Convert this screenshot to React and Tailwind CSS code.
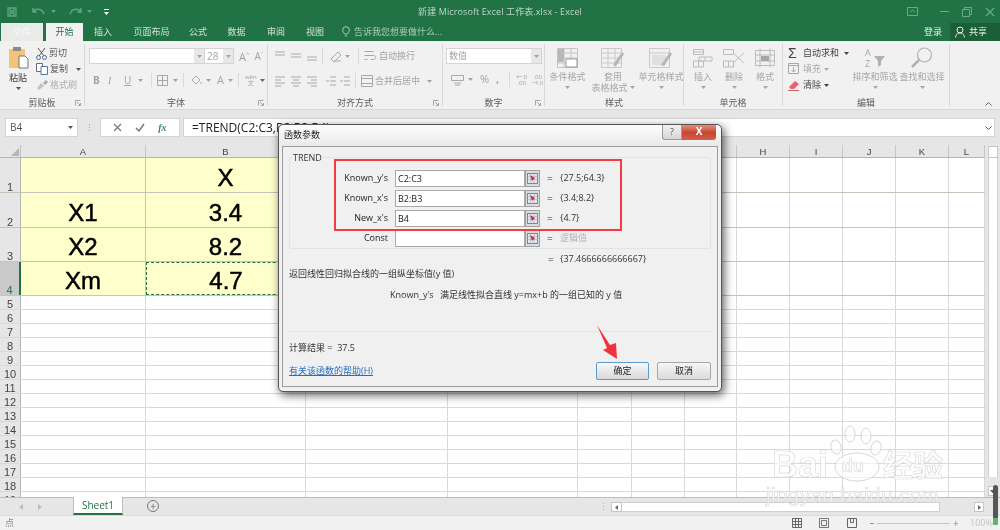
const cols = [125, 160, 142, 130, 54, 53, 52, 53, 53, 53, 53, 36];
const letters = ["A", "B", "C", "D", "E", "F", "G", "H", "I", "J", "K", "L"];
const gridCols = "grid grid-cols-[21px_125px_160px_142px_130px_54px_53px_52px_53px_53px_53px_53px_36px]";

const rows = [
  { n: 1, h: "h-[35px]", a: "", b: "X" },
  { n: 2, h: "h-[35px]", a: "X1", b: "3.4" },
  { n: 3, h: "h-[34px]", a: "X2", b: "8.2" },
  { n: 4, h: "h-[34px]", a: "Xm", b: "4.7" },
];
const emptyRows = [5, 6, 7, 8, 9, 10, 11, 12, 13, 14, 15, 16, 17, 18, 19];

const Caret = ({ className = "mx-[3px]" }) => (
  <svg width="5" height="3" viewBox="0 0 5 3" className={"shrink-0 " + className}>
    <path d="M0 0h5L2.5 3z" fill="currentColor" />
  </svg>
);

const Ic = ({ w = 14, h = 14, children, className = "" }) => (
  <svg width={w} height={h} viewBox={`0 0 ${w} ${h}`} fill="none" stroke="#a8a8a8" strokeWidth="1" className={"shrink-0 " + className}>
    {children}
  </svg>
);

const AlignIcon = ({ lines }) => (
  <Ic w={12} h={12}>
    {lines.map((l, i) => (
      <path key={i} d={`M${l[0]} ${l[2]}H${l[1]}`} />
    ))}
  </Ic>
);

const Group = ({ w, label, launcher, children }) => (
  <div className={"relative flex flex-col border-r border-[#d9d9d9] my-[3px] " + w}>
    <div className="h-[52px] shrink-0 flex">{children}</div>
    <div className="h-[13px] shrink-0 -mb-[3px] flex items-center justify-center text-[9px] text-[#5c5c5c]">{label}</div>
    {launcher && (
      <svg width="6" height="6" viewBox="0 0 6 6" className="absolute right-[3px] bottom-0">
        <path d="M0.5 5.500V0.5H5.500M2 2l3 3M5.500 3v2.500H3" stroke="#a5a5a5" fill="none" />
      </svg>
    )}
  </div>
);

const BigBtn = ({ w, label, label2, children, caret = true }) => (
  <div className={"flex flex-col items-center text-[9px] leading-[11px] text-[#a6a6a6] whitespace-nowrap " + w}>
    <div className="h-[24px] mt-[2px] flex items-center">{children}</div>
    <div className="mt-[1px]">{label}</div>
    {label2 && (
      <div className="flex items-center">
        {label2}
        <Caret className="ml-[2px]" />
      </div>
    )}
    {caret && !label2 && <Caret className="mt-[4px]" />}
  </div>
);

const RefBtn = () => (
  <div className="w-[15px] h-[17px] bg-[#dcdcdc] border border-[#a0a0a0] flex items-center justify-center">
    <svg width="11" height="11" viewBox="0 0 11 11">
      <rect x="0.5" y="0.5" width="10" height="10" fill="#dfe8f4" stroke="#6f87a8" />
      <path d="M0.5 3.500h10M0.5 6.500h10M3.500 .5v10M7 .5v10" stroke="#9eb2cc" strokeWidth=".6" />
      <path d="M3 2l5 3-3 3z" fill="#d9322c" />
    </svg>
  </div>
);

const ArgRow = ({ label, value, result, muted }) => (
  <div className="flex items-center h-[20px]">
    <div className="w-[93px] text-right text-[9px] text-[#222]">{label}</div>
    <div className="ml-[7px] w-[130px] h-[17px] bg-white border border-[#a9a9a9] pl-[2px] text-[9px] leading-[15px] text-[#222]">{value}</div>
    <RefBtn />
    <div className="ml-[7px] w-[13px] text-[10px] text-[#333]">=</div>
    <div className={"text-[9px] " + (muted ? "text-[#b5b5b5]" : "text-[#333]")}>{result}</div>
  </div>
);

export default function App() {
  return (
    <div className="relative w-[1000px] h-[530px] overflow-hidden bg-white font-['Open_Sans','Noto_Sans_CJK_SC',sans-serif] blur-[0.4px]">
      {/* title bar */}
      <div className="bg-[#217346] text-white">
        <div className="h-[23px] flex items-center">
          <div className="flex-1 flex items-center gap-[5px] pl-[5px] text-[#5fa57f]">
            <svg width="14" height="14" viewBox="0 0 14 14" fill="none" stroke="currentColor" strokeWidth="1.3">
              <path d="M3 3h8v8H3zM5 3v3h4V3M5 11V8h4v3" />
            </svg>
            <svg width="14" height="12" viewBox="0 0 14 12" fill="none" stroke="currentColor" strokeWidth="1.5" className="ml-[8px]">
              <path d="M1 2v4h4M1 6c2-4 9-4 11 2" />
            </svg>
            <Caret className="" />
            <svg width="14" height="12" viewBox="0 0 14 12" fill="none" stroke="currentColor" strokeWidth="1.5" className="ml-[7px]">
              <path d="M13 2v4H9M13 6C11 2 4 2 2 8" />
            </svg>
            <Caret className="" />
            <svg width="5" height="6" viewBox="0 0 5 6" className="ml-[7px] text-white">
              <path d="M0 0h5v1H0zM0 3h5L2.500 6z" fill="currentColor" />
            </svg>
          </div>
          <div className="text-[9px] text-[#bcd6c8] tracking-[0.1px]">新建 Microsoft Excel 工作表.xlsx - Excel</div>
          <div className="flex-1 flex items-center justify-end gap-[12px] pr-[5px] text-[#6da98a]">
            <svg width="11" height="9" viewBox="0 0 11 9" fill="none" stroke="currentColor">
              <path d="M.5.500h10v8H.5zM3 5l2.500-2L8 5" />
            </svg>
            <div className="w-[9px] h-px bg-current ml-[10px]"></div>
            <svg width="10" height="10" viewBox="0 0 10 10" fill="none" stroke="currentColor" className="ml-[1px]">
              <path d="M.5 2.500h7v7h-7zM2.500 2.500V.5h7v7H7.500" />
            </svg>
            <svg width="10" height="10" viewBox="0 0 10 10" fill="none" stroke="currentColor" strokeWidth="1.2" className="ml-[1px]">
              <path d="M1 1l8 8M9 1l-8 8" />
            </svg>
          </div>
        </div>
        <div className="h-[18px] flex items-stretch text-[9px] text-[#cfe3d8]">
          <div className="ml-px w-[42px] bg-[#e9ebe9] flex items-center justify-center text-[#f7f7f7]">文件</div>
          <div className="ml-[3px] w-[37px] bg-[#f1f1f1] flex items-center justify-center text-[#217346]">开始</div>
          <div className="w-[40px] flex items-center justify-center">插入</div>
          <div className="w-[57px] flex items-center justify-center">页面布局</div>
          <div className="w-[36px] flex items-center justify-center">公式</div>
          <div className="w-[41px] flex items-center justify-center">数据</div>
          <div className="w-[38px] flex items-center justify-center">审阅</div>
          <div className="w-[40px] flex items-center justify-center">视图</div>
          <div className="ml-[7px] flex items-center gap-[4px] text-[#a9cbb8]">
            <svg width="8" height="12" viewBox="0 0 8 12" fill="none" stroke="currentColor">
              <path d="M2.500 8C2 6.500.7 6 .7 4a3.300 3.300 0 0 1 6.600 0c0 2-1.300 2.500-1.800 4zM3 10h2" />
            </svg>
            告诉我您想要做什么...
          </div>
          <div className="ml-auto mr-[8px] flex items-center text-[#e6f0ea]">登录</div>
          <div className="w-[50px] bg-[#1b5e38] flex items-center gap-[3px] pl-[5px] text-[#eaf3ee]">
            <svg width="11" height="12" viewBox="0 0 11 12" fill="none" stroke="currentColor">
              <circle cx="5" cy="4" r="3" />
              <path d="M.5 11.500C1 8 3 7 5 7s4 1 4.500 4.500" />
            </svg>
            共享
          </div>
        </div>
      </div>

      {/* ribbon */}
      <div className="h-[68px] flex bg-[#f1f1f1]">
        <Group w="w-[85px]" label="剪贴板" launcher>
          <div className="w-[36px] flex flex-col items-center text-[9px] text-[#444]">
            <svg width="21" height="22" viewBox="0 0 21 22" className="mt-[3px]">
              <rect x="1" y="2" width="16" height="19" fill="#f2c477" />
              <rect x="5" y="0" width="8" height="4" fill="#8a8a8a" />
              <path d="M11 9h6l3 3v9h-9z" fill="#fff" stroke="#777" />
            </svg>
            <div className="leading-[11px] mt-[3px]">粘贴</div>
            <Caret className="mt-[4px] text-[#555]" />
          </div>
          <div className="flex flex-col pt-[1px] text-[9px] leading-[16px]">
            <div className="flex items-center gap-[2px] text-[#5a5a5a]">
              <svg width="11" height="13" viewBox="0 0 11 13" fill="none" stroke="#4a6f9a">
                <path d="M2 1l6 8M9 1L3 9" stroke="#555" />
                <circle cx="2.500" cy="10.500" r="2" />
                <circle cx="8.500" cy="10.500" r="2" />
              </svg>
              剪切
            </div>
            <div className="flex items-center gap-[2px] text-[#5a5a5a]">
              <svg width="12" height="12" viewBox="0 0 12 12" fill="#fff" stroke="#6d6d6d">
                <path d="M.5.500h6v8h-6z" />
                <path d="M5 3.500h6.500v8H5z" stroke="#4a78ad" />
              </svg>
              复制
              <Caret className="ml-[6px]" />
            </div>
            <div className="flex items-center gap-[2px] text-[#aeaeae]">
              <svg width="12" height="11" viewBox="0 0 12 11">
                <path d="M1 8l4-5 3 3-5 4z" fill="#c4c4c4" />
                <path d="M7 3l3-3 2 2-3 3z" fill="#a9a9a9" />
              </svg>
              格式刷
            </div>
          </div>
        </Group>

        <Group w="w-[183px]" label="字体" launcher>
          <div className="pl-[4px] pt-[4px] flex flex-col text-[#a3a3a3]">
            <div className="flex items-center">
              <div className="w-[116px] h-[16px] bg-white border border-[#d4d4d4] flex justify-end">
                <div className="w-[10px] bg-[#e8e8e8] flex items-center justify-center"><Caret className="" /></div>
              </div>
              <div className="w-[29px] h-[16px] bg-white border border-[#d4d4d4] border-l-0 flex justify-between text-[10px] leading-[14px] pl-[2px]">
                28
                <div className="w-[10px] bg-[#e8e8e8] flex items-center justify-center"><Caret className="" /></div>
              </div>
              <div className="ml-[5px] text-[11px] leading-none">A<span className="text-[6px] align-top">^</span></div>
              <div className="ml-[5px] text-[10px] leading-none">A<span className="text-[6px] align-top">ˇ</span></div>
            </div>
            <div className="mt-[9px] h-[14px] flex items-center text-[10px]">
              <span className="ml-[4px] w-[15px] font-bold">B</span>
              <span className="w-[16px] italic font-['Liberation_Serif',serif]">I</span>
              <span className="w-[12px] underline">U</span>
              <Caret className="ml-[2px]" />
              <div className="ml-[8px] mr-[5px] w-px h-[14px] bg-[#d9d9d9]"></div>
              <Ic w={11} h={11}><path d="M.5.500h10v10H.5zM.5 5.500h10M5.500.5v10" /></Ic>
              <Caret className="ml-[5px]" />
              <div className="ml-[5px] mr-[6px] w-px h-[14px] bg-[#d9d9d9]"></div>
              <Ic w={13} h={12}><path d="M2 6l4-4 4 4-4 4zM11 8v2" /></Ic>
              <Caret className="ml-[3px]" />
              <span className="ml-[6px] text-[11px]">A</span>
              <Caret className="ml-[4px]" />
              <div className="ml-[5px] mr-[6px] w-px h-[14px] bg-[#d9d9d9]"></div>
              <div className="flex flex-col items-center text-[6px] leading-[6px]"><span>wén</span><span>文</span></div>
              <Caret className="ml-[3px] text-[#666]" />
            </div>
          </div>
        </Group>

        <Group w="w-[175px]" label="对齐方式" launcher>
          <div className="pl-[6px] pt-[3px] flex flex-col text-[#a3a3a3] text-[9px]">
            <div className="h-[18px] flex items-center">
              <AlignIcon lines={[[1, 11, 2], [1, 11, 5]]} />
              <div className="ml-[4px]"><AlignIcon lines={[[1, 11, 4], [1, 11, 7]]} /></div>
              <div className="ml-[4px]"><AlignIcon lines={[[1, 11, 7], [1, 11, 10]]} /></div>
              <div className="ml-[4px] mr-[7px] w-px h-[16px] bg-[#d9d9d9]"></div>
              <Ic w={13} h={12}><path d="M1 9l7-7 3 3-7 7zM4 11l7 0" /></Ic>
              <Caret className="ml-[2px]" />
              <div className="ml-[8px] mr-[5px] w-px h-[16px] bg-[#d9d9d9]"></div>
              <Ic w={13} h={12}><path d="M.5 1.500h9M.5 5.500h9c3 0 3 4 0 4H7M.5 9.500h3" /></Ic>
              <span className="ml-[2px]">自动换行</span>
            </div>
            <div className="mt-[8px] h-[16px] flex items-center">
              <AlignIcon lines={[[1, 11, 2], [1, 7, 5], [1, 11, 8], [1, 7, 11]]} />
              <div className="ml-[4px]"><AlignIcon lines={[[1, 11, 2], [3, 9, 5], [1, 11, 8], [3, 9, 11]]} /></div>
              <div className="ml-[4px]"><AlignIcon lines={[[1, 11, 2], [5, 11, 5], [1, 11, 8], [5, 11, 11]]} /></div>
              <div className="ml-[7px]"><AlignIcon lines={[[1, 4, 6], [5, 11, 2], [5, 11, 6], [5, 11, 10]]} /></div>
              <div className="ml-[2px]"><AlignIcon lines={[[1, 4, 6], [5, 11, 2], [5, 11, 6], [5, 11, 10]]} /></div>
              <div className="ml-[4px] mr-[5px] w-px h-[16px] bg-[#d9d9d9]"></div>
              <Ic w={12} h={12}><path d="M.5.500h11v11H.5zM.5 3.500h11M.5 8.500h11" /></Ic>
              <span className="ml-[2px]">合并后居中</span>
              <Caret className="ml-[7px]" />
            </div>
          </div>
        </Group>

        <Group w="w-[102px]" label="数字" launcher>
          <div className="pl-[3px] pt-[4px] flex flex-col text-[#a3a3a3]">
            <div className="w-[96px] h-[16px] bg-white border border-[#d4d4d4] flex justify-between text-[9px] leading-[14px] pl-[2px]">
              数值
              <div className="w-[10px] bg-[#e8e8e8] flex items-center justify-center"><Caret className="" /></div>
            </div>
            <div className="mt-[8px] h-[15px] flex items-center text-[11px]">
              <Ic w={13} h={12} className="ml-[5px]"><path d="M.5 1.500h12v5H.5zM3 9h7M4 11h5" /></Ic>
              <Caret className="ml-[4px]" />
              <span className="ml-[7px]">%</span>
              <span className="ml-[7px] font-bold">,</span>
              <div className="ml-[10px] mr-[6px] w-px h-[15px] bg-[#d9d9d9]"></div>
              <div className="text-[6px] leading-[6px] text-center">←.0<br />.00</div>
              <div className="ml-[5px] text-[6px] leading-[6px] text-center">.00<br />→.0</div>
            </div>
          </div>
        </Group>

        <Group w="w-[139px]" label="样式">
          <div className="ml-[3px] flex">
            <BigBtn w="w-[39px]" label="条件格式">
              <svg width="21" height="20" viewBox="0 0 21 20" fill="none" stroke="#c4c4c4">
                <path d="M.5.500h20v19H.5zM.5 5h20M.5 10h20M.5 15h20M7 .5v19M14 .5v19" />
                <rect x="1" y="1" width="6" height="13" fill="#b8b8b8" stroke="none" />
                <rect x="9" y="11" width="11" height="8" fill="#fff" stroke="#999" />
              </svg>
            </BigBtn>
            <BigBtn w="w-[52px]" label="套用" label2="表格格式">
              <svg width="24" height="20" viewBox="0 0 24 20" fill="none" stroke="#c9c9c9">
                <path d="M.5.500h20v19H.5zM.5 5h20M.5 10h20M.5 15h20M7 .5v19M14 .5v19" />
                <path d="M12 17l9-13 2 2-8 12z" fill="#b5b5b5" stroke="none" />
              </svg>
            </BigBtn>
            <BigBtn w="w-[44px]" label="单元格样式">
              <svg width="24" height="20" viewBox="0 0 24 20" fill="none" stroke="#c9c9c9">
                <path d="M.5.500h20v19H.5zM.5 5h20" />
                <rect x="3" y="7" width="14" height="10" fill="#e0e0e0" stroke="none" />
                <path d="M12 17l9-13 2 2-8 12z" fill="#b5b5b5" stroke="none" />
              </svg>
            </BigBtn>
          </div>
        </Group>

        <Group w="w-[99px]" label="单元格">
          <div className="flex ml-[3px]">
            <BigBtn w="w-[32px]" label="插入">
              <svg width="20" height="20" viewBox="0 0 20 20" fill="none" stroke="#bcbcbc">
                <path d="M.5 1.500h10v5H.5zM.5 4h10M6 9h13v4H6zM12 9v4M.5 13h10v6H.5zM5.500 13v6" />
              </svg>
            </BigBtn>
            <BigBtn w="w-[30px]" label="删除">
              <svg width="22" height="20" viewBox="0 0 22 20" fill="none" stroke="#bcbcbc">
                <path d="M.5 1.500h10v5H.5zM.5 13h10v6H.5zM5.500 13v6M10 5l11 10M21 5L10 15" />
              </svg>
            </BigBtn>
            <BigBtn w="w-[32px]" label="格式">
              <svg width="20" height="20" viewBox="0 0 20 20" fill="none" stroke="#bcbcbc">
                <path d="M.5 2.500h19v15H.5zM5 .5v19M15 .5v19M.5 7h19M.5 13h19" />
                <rect x="6" y="8" width="8" height="5" fill="#a5a5a5" stroke="none" />
              </svg>
            </BigBtn>
          </div>
        </Group>

        <Group w="w-[167px]" label="编辑">
          <div className="pl-[5px] pt-[1px] w-[69px] flex flex-col text-[9px] leading-[16px] whitespace-nowrap">
            <div className="flex items-center text-[#444]">
              <span className="w-[14px] text-[14px] leading-[16px] font-['Liberation_Sans',sans-serif]">Σ</span>
              <span className="ml-[1px]">自动求和</span>
              <Caret className="ml-[5px]" />
            </div>
            <div className="flex items-center text-[#aaa]">
              <Ic w={12} h={12} className="mr-[3px]"><path d="M.5.500h10v10H.5zM.5 2.500h10M5.500 4v5M3.500 7l2 2 2-2" /></Ic>
              填充<Caret className="ml-[3px]" />
            </div>
            <div className="flex items-center text-[#444]">
              <svg width="12" height="11" viewBox="0 0 12 11" className="mr-[3px]">
                <path d="M1 7l6-6 4 3-5 5H3z" fill="#e8636a" />
                <path d="M0 10.500h11" stroke="#c9666b" />
              </svg>
              清除<Caret className="ml-[3px]" />
            </div>
          </div>
          <BigBtn w="w-[46px]" label="排序和筛选">
            <svg width="22" height="24" viewBox="0 0 22 24" fill="none" stroke="#b0b0b0">
              <path d="M10 10h11l-4 5v4l-3 2v-6z" fill="#b0b0b0" stroke="none" />
              <text x="1" y="10" fontSize="9" fill="#aaa" stroke="none">A</text>
              <text x="1" y="21" fontSize="9" fill="#aaa" stroke="none">Z</text>
            </svg>
          </BigBtn>
          <BigBtn w="w-[48px]" label="查找和选择">
            <svg width="22" height="22" viewBox="0 0 22 22" fill="none" stroke="#b0b0b0" strokeWidth="1.2">
              <circle cx="13.500" cy="8" r="7" />
              <path d="M8 13l-7 7" strokeWidth="2.500" />
            </svg>
          </BigBtn>
        </Group>

        <div className="flex-1 relative">
          <svg width="7" height="4" viewBox="0 0 7 4" className="absolute right-[8px] bottom-[3px]" fill="none" stroke="#666">
            <path d="M.5 3.500l3-3 3 3" />
          </svg>
        </div>
      </div>

      {/* strip + formula bar */}
      <div className="h-[6px] bg-[#e6e6e6] border-t border-[#d8d8d8]"></div>
      <div className="h-[30px] bg-[#e6e6e6] flex items-start pt-[3px]">
        <div className="ml-[5px] w-[73px] h-[19px] bg-white border border-[#d4d4d4] flex items-center justify-between px-[4px] text-[10px] text-[#555]">
          B4
          <Caret className="text-[#555]" />
        </div>
        <div className="w-[22px] text-center text-[#999] text-[9px] leading-[19px]">⋮</div>
        <div className="w-[80px] h-[19px] bg-white border border-[#d4d4d4] flex items-center justify-around px-[6px]">
          <svg width="9" height="9" viewBox="0 0 9 9" stroke="#777" strokeWidth="1.2"><path d="M1 1l7 7M8 1L1 8" /></svg>
          <svg width="10" height="9" viewBox="0 0 10 9" fill="none" stroke="#777" strokeWidth="1.4"><path d="M1 5l3 3 5-7" /></svg>
          <span className="text-[10px] italic font-bold text-[#3c8a60] font-['Liberation_Serif',serif]">fx</span>
        </div>
        <div className="ml-[3px] w-[812px] h-[19px] bg-white border border-[#d4d4d4] pl-[8px] text-[12px] leading-[17px] text-[#222] relative">
          =TREND(C2:C3,B2:B3,B4)
          <svg width="7" height="4" viewBox="0 0 7 4" className="absolute right-[2px] top-[7px]" fill="none" stroke="#555">
            <path d="M.5.500l3 3 3-3" />
          </svg>
        </div>
      </div>

      {/* sheet + vertical scrollbar */}
      <div className="h-[352px] flex overflow-hidden">
        <div className="w-[985px] border-r border-[#c6c6c6]">
          <div className={gridCols + " h-[13px] bg-[#e6e6e6] border-b border-[#b4b4b4] text-[9.500px] leading-[10px] text-[#444] text-center font-['Liberation_Sans',sans-serif]"}>
            <div className="border-r border-[#c0c0c0] flex items-end justify-end p-[1px]">
              <div className="w-0 h-0 border-l-[8px] border-l-transparent border-b-[8px] border-b-[#b5b5b5]"></div>
            </div>
            {letters.map((l, i) => (
              <div key={l} className="pt-[2px] border-r border-[#c6c6c6]">{l}</div>
            ))}
          </div>
          {rows.map((r) => (
            <div key={r.n} className={gridCols + " border-b border-[#c4c4b8] " + r.h}>
              <div className={"flex items-end justify-center text-[11px] leading-[10px] border-r font-['Liberation_Sans',sans-serif] " + (r.n === 4 ? "bg-[#c9c9c9] text-[#217346] border-r-2 border-[#217346]" : "bg-[#e6e6e6] text-[#444] border-[#b4b4b4]")}>{r.n}</div>
              <div className="bg-[#ffffcc] border-r border-[#c4c4b8] flex items-center justify-center pt-[5px] text-[24px] leading-[24px] text-black font-['Liberation_Sans',sans-serif] [-webkit-text-stroke:0.5px_black]">{r.a}</div>
              <div className={"bg-[#ffffcc] flex items-center justify-center pt-[5px] text-[24px] leading-[24px] text-black font-['Liberation_Sans',sans-serif] [-webkit-text-stroke:0.5px_black] " + (r.n === 4 ? "border border-dashed border-[#217346]" : "border-r border-[#c4c4b8]")}>{r.b}</div>
              <div className="bg-[#ffffcc]"></div>
              {cols.slice(3).map((c, i) => (
                <div key={i} className="border-r border-[#d9d9d9]"></div>
              ))}
            </div>
          ))}
          {emptyRows.map((n) => (
            <div key={n} className={gridCols + " h-[14px] border-b border-[#d9d9d9]"}>
              <div className="bg-[#e6e6e6] border-r border-[#b4b4b4] flex items-end justify-center text-[11px] leading-[10px] text-[#444] font-['Liberation_Sans',sans-serif]">{n}</div>
              {cols.map((c, i) => (
                <div key={i} className="border-r border-[#d9d9d9]"></div>
              ))}
            </div>
          ))}
        </div>
        <div className="flex-1 bg-[#e6e6e6] flex flex-col items-center">
          <div className="w-[10px] h-[12px] mt-px bg-white border border-[#c6c6c6]"></div>
          <div className="w-[10px] h-[319px] bg-white border-x border-[#d0d0d0]"></div>
          <div className="w-[10px] h-[10px] mt-[9px] bg-white border border-[#c6c6c6] flex items-center justify-center text-[#555]"><Caret className="" /></div>
        </div>
      </div>

      {/* sheet tabs */}
      <div className="h-[18px] bg-[#e6e6e6] border-t border-[#bdbdbd] flex items-stretch">
        <div className="w-[73px] flex items-center gap-[15px] pl-[19px]">
          <svg width="4" height="6" viewBox="0 0 4 6"><path d="M4 0v6L0 3z" fill="#bcbcbc" /></svg>
          <svg width="4" height="6" viewBox="0 0 4 6"><path d="M0 0v6l4-3z" fill="#bcbcbc" /></svg>
        </div>
        <div className="w-[50px] bg-white border-x border-[#bdbdbd] border-b-2 border-b-[#217346] -mt-px text-center text-[10px] leading-[17px] text-[#217346]">Sheet1</div>
        <div className="ml-[24px] w-[12px] h-[12px] mt-[2px] rounded-full border border-[#777] flex items-center justify-center text-[10px] leading-none text-[#666]">+</div>
        <div className="ml-[440px] w-[2px] flex items-center text-[#aaa] text-[9px]">⋮</div>
        <div className="ml-[10px] mt-[4px] w-[11px] h-[10px] bg-white border border-[#c6c6c6] flex items-center justify-center">
          <svg width="3" height="5" viewBox="0 0 3 5"><path d="M3 0v5L0 2.500z" fill="#666" /></svg>
        </div>
        <div className="mt-[4px] w-[318px] h-[10px] bg-white border-y border-r border-[#cfcfcf]"></div>
        <div className="ml-[34px] mt-[4px] w-[10px] h-[10px] bg-white border border-[#c6c6c6] flex items-center justify-center">
          <svg width="3" height="5" viewBox="0 0 3 5"><path d="M0 0v5l3-2.500z" fill="#666" /></svg>
        </div>
      </div>

      {/* status bar */}
      <div className="h-[15px] bg-[#f1f1f1] border-t border-[#dcdcdc] flex items-center">
        <span className="ml-[5px] text-[9px] text-[#888]">点</span>
        <div className="ml-auto flex items-center">
          <svg width="10" height="10" viewBox="0 0 10 10" fill="none" stroke="#666"><path d="M.5.500h9v9h-9zM.5 3.500h9M.5 6.500h9M3.500.5v9M6.500.5v9" /></svg>
          <svg width="10" height="10" viewBox="0 0 10 10" fill="none" stroke="#777" className="ml-[17px]"><path d="M.5.500h9v9h-9zM2.500 2.500h5v5h-5z" /></svg>
          <svg width="10" height="10" viewBox="0 0 10 10" fill="none" stroke="#666" className="ml-[18px]"><path d="M.5.500h9v9h-9zM3.500.5v4h3v-4" /></svg>
          <div className="ml-[13px] w-[4px] h-px bg-[#999]"></div>
          <div className="ml-[3px] w-[73px] h-px bg-[#c4c4c4]"></div>
          <span className="ml-[3px] w-[5px] text-[10px] leading-none text-[#888]">+</span>
          <span className="ml-[12px] w-[30px] text-[9px] text-[#c4c4c4]">100%</span>
        </div>
      </div>

      {/* overlay scroll handle from the capture */}
      <div className="absolute left-[993px] top-[485px] w-[5px] h-[40px] rounded-full bg-[#555] overflow-hidden flex items-end">
        <div className="w-full h-[7px] bg-[#5cb56a]"></div>
      </div>

      {/* watermark */}
      <div className="absolute left-[766px] top-[425px] w-[185px] h-[85px] text-white/70 [-webkit-text-stroke:0.7px_#dadada] font-['Liberation_Sans','Noto_Sans_CJK_SC',sans-serif] font-bold">
        <svg width="60" height="58" viewBox="0 0 60 58" className="absolute left-[62px] top-0" fill="#fff" fillOpacity="0.6" stroke="#d8d8d8">
          <ellipse cx="8" cy="22" rx="5" ry="7" transform="rotate(-15 8 22)" />
          <ellipse cx="22" cy="9" rx="5" ry="8" />
          <ellipse cx="38" cy="11" rx="5" ry="8" />
          <ellipse cx="48" cy="23" rx="5" ry="7" transform="rotate(15 48 23)" />
          <ellipse cx="29" cy="42" rx="22" ry="14" />
        </svg>
        <span className="absolute left-[6px] top-[22px] text-[36px] leading-[36px]">Bai</span>
        <span className="absolute left-[76px] top-[32px] text-[18px] leading-[18px]">du</span>
        <span className="absolute left-[117px] top-[25px] text-[30px] leading-[32px]">经验</span>
        <span className="absolute left-0 top-[58px] text-[20px] leading-[24px] tracking-[0.7px] font-normal">jingyan.baidu.com</span>
      </div>

      {/* 函数参数 dialog */}
      <div className="absolute left-[278px] top-[124px] w-[444px] h-[268px] rounded-[5px] border border-[#555] bg-[#f0f0f0] shadow-[2px_3px_10px_rgba(0,0,0,0.65)] flex flex-col">
        <div className="h-[21px] flex items-start justify-between bg-gradient-to-b from-[#fdfdfd] to-[#e9e9e9] rounded-t-[5px]">
          <span className="pl-[5px] pt-[3px] text-[9px] leading-[13px] text-[#222]">函数参数</span>
          <div className="flex mr-[5px]">
            <div className="w-[20px] h-[15px] border border-[#9a9a9a] border-t-0 rounded-bl-[3px] bg-gradient-to-b from-[#f2f2f2] to-[#d6d6d6] text-center text-[9px] leading-[13px] text-[#555]">?</div>
            <div className="w-[34px] h-[15px] rounded-br-[3px] bg-gradient-to-b from-[#e58d7f] via-[#c7452f] to-[#d1604c] text-center text-[10px] leading-[13px] font-bold text-white">X</div>
          </div>
        </div>
        <div className="mx-[3px] mb-[4px] flex-1 border border-[#9b9b9b] px-[6px] pt-[10px] flex flex-col">
          <div className="relative h-[92px] border border-[#dde5ec] rounded-[2px] px-[5px] pt-[10px]">
            <span className="absolute left-[2px] -top-[7px] bg-[#f0f0f0] px-px text-[9px] leading-[13px] text-[#333]">TREND</span>
            <ArgRow label="Known_y's" value="C2:C3" result="{27.5;64.3}" />
            <ArgRow label="Known_x's" value="B2:B3" result="{3.4;8.2}" />
            <ArgRow label="New_x's" value="B4" result="{4.7}" />
            <ArgRow label="Const" value="" result="逻辑值" muted />
          </div>
          <div className="mt-[3px] h-[14px] pl-[259px] flex items-center text-[9px] text-[#333]">
            <span className="w-[12px] text-[10px]">=</span>{"{37.4666666666667}"}
          </div>
          <div className="mt-[1px] text-[9px] leading-[14px] text-[#333]">返回线性回归拟合线的一组纵坐标值(y 值)</div>
          <div className="mt-[7px] pl-[101px] flex text-[9px] leading-[14px] text-[#333]">
            <span className="w-[50px]">Known_y's</span>
            <span>满足线性拟合直线 y=mx+b 的一组已知的 y 值</span>
          </div>
          <div className="mt-[29px] h-px bg-[#dfe5ea]"></div>
          <div className="mt-[9px] text-[9px] leading-[14px] text-[#333]">计算结果 =&nbsp;&nbsp;37.5</div>
          <div className="mt-[7px] flex items-center justify-between">
            <span className="text-[9px] leading-[14px] text-[#2a6ebb] underline">有关该函数的帮助(H)</span>
            <div className="flex gap-[8px] text-[9px]">
              <div className="w-[53px] h-[18px] rounded-[2px] border border-[#5a9dc9] bg-gradient-to-b from-[#f8f8f8] to-[#d9d9d9] text-center leading-[16px] text-[#222]">确定</div>
              <div className="w-[54px] h-[18px] rounded-[2px] border border-[#a8a8a8] bg-gradient-to-b from-[#f6f6f6] to-[#dadada] text-center leading-[16px] text-[#222]">取消</div>
            </div>
          </div>
        </div>
      </div>

      {/* red markup */}
      <div className="absolute left-[334px] top-[159px] w-[288px] h-[72px] border-2 border-[#f13c43]"></div>
      <svg width="30" height="40" viewBox="0 0 30 40" className="absolute left-[592px] top-[324px]">
        <path d="M5 1L18 21l6-2 1 16-14-9 4-2z" fill="#f0323c" />
      </svg>
    </div>
  );
}
